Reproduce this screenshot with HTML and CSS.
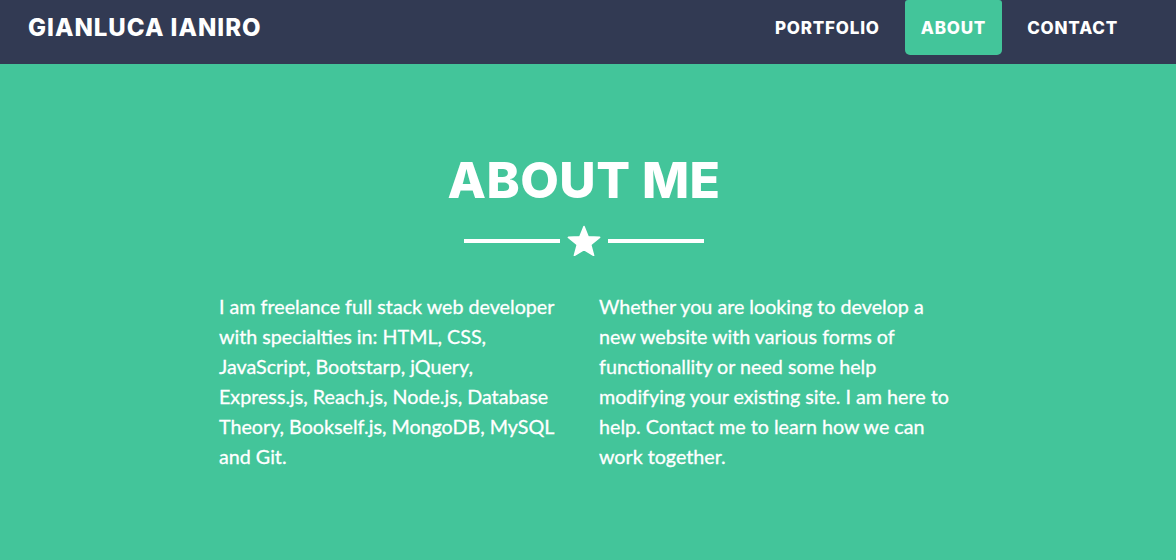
FILE: index.html
```html
<!DOCTYPE html>
<html lang="en">
<head>
<meta charset="utf-8">
<title>Gianluca Ianiro</title>
<link rel="stylesheet" href="styles.css">
</head>
<body>
<nav class="navbar">
  <a class="brand" href="#">GIANLUCA IANIRO</a>
  <ul class="nav-links">
    <li><a class="nav-link" href="#">PORTFOLIO</a></li>
    <li><a class="nav-link active" href="#">ABOUT</a></li>
    <li><a class="nav-link" href="#">CONTACT</a></li>
  </ul>
</nav>
<section class="about">
  <div class="container">
    <h2 class="title">ABOUT ME</h2>
    <div class="divider">
      <span class="line"></span>
      <svg class="star" width="34" height="31" viewBox="0 0 34 31" aria-hidden="true">
        <polygon points="17,1.5 21.1,11.8 32.6,12.4 23.7,19.7 26.6,30.4 17,24.5 7.4,30.4 10.3,19.7 1.4,12.4 12.9,11.8" fill="#fff" stroke="#fff" stroke-width="1.6" stroke-linejoin="round"/>
      </svg>
      <span class="line"></span>
    </div>
    <div class="columns">
      <p>I am freelance full stack web developer with specialties in: HTML, CSS, JavaScript, Bootstarp, jQuery, Express.js, Reach.js, Node.js, Database Theory, Bookself.js, MongoDB, MySQL and Git.</p>
      <p>Whether you are looking to develop a new website with various forms of functionallity or need some help modifying your existing site. I am here to help. Contact me to learn how we can work together.</p>
    </div>
  </div>
</section>
</body>
</html>
```
FILE: styles.css
```css
* { box-sizing: border-box; }
html, body { margin: 0; padding: 0; }
body {
  background: #43c59a;
  font-family: "Lato", "Liberation Sans", sans-serif;
  color: #fff;
  min-height: 560px;
}
.navbar {
  height: 64px;
  background: #323a53;
  display: flex;
  align-items: flex-start;
  justify-content: space-between;
  padding: 0 42px 0 28px;
}
.brand {
  font-family: "Inter", "DejaVu Sans", sans-serif;
  font-weight: 800;
  font-size: 24px;
  letter-spacing: 1px;
  color: #fff;
  text-decoration: none;
  line-height: 55px;
}
.nav-links {
  list-style: none;
  margin: 0;
  padding: 0;
  display: flex;
  gap: 9px;
}
.nav-link {
  display: flex;
  align-items: center;
  height: 55px;
  padding: 0 16px;
  font-family: "Inter", "DejaVu Sans", sans-serif;
  font-weight: 800;
  font-size: 17px;
  letter-spacing: 0.8px;
  color: #fff;
  text-decoration: none;
}
.nav-link.active {
  background: #43c59a;
  border-radius: 3px 3px 5px 5px;
}
.about {
  padding-top: 91px;
}
.container {
  width: 1140px;
  margin: 0 auto;
  padding-right: 8px;
  box-sizing: content-box;
}
.title {
  margin: 0;
  text-align: center;
  font-family: "Inter", "DejaVu Sans", sans-serif;
  font-weight: 800;
  font-size: 50px;
  line-height: 50px;
  letter-spacing: 0.5px;
}
.divider {
  margin-top: 20px;
  height: 30px;
  display: flex;
  justify-content: center;
  align-items: center;
  gap: 7px;
}
.line {
  width: 96px;
  height: 4px;
  background: #fff;
  margin-top: 2px;
}
.star { display: block; }
.columns {
  margin-top: 37px;
  display: grid;
  grid-template-columns: 347px 350px;
  column-gap: 33px;
  justify-content: center;
}
.columns p {
  margin: 0;
  font-size: 19.7px;
  line-height: 30px;
  -webkit-text-stroke: 0.3px #fff;
}
```
